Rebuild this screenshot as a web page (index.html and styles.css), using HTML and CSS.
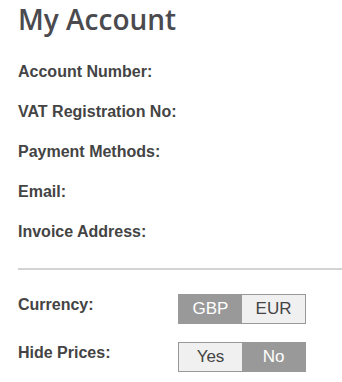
FILE: index.html
```html
<!DOCTYPE html>
<html lang="en">
<head>
    <meta charset="UTF-8">
    <meta name="viewport" content="width=device-width, initial-scale=1.0">
    <title>My Account</title>
    <link rel="stylesheet" href="styles.css">
</head>
<body>
    <div class="account">
        <h1>My Account</h1>

        <div class="details">
            <div class="detail-row"><span class="label">Account Number:</span></div>
            <div class="detail-row"><span class="label">VAT Registration No:</span></div>
            <div class="detail-row"><span class="label">Payment Methods:</span></div>
            <div class="detail-row"><span class="label">Email:</span></div>
            <div class="detail-row"><span class="label">Invoice Address:</span></div>
        </div>

        <hr class="divider">

        <div class="settings">
            <div class="setting-row">
                <span class="label">Currency:</span>
                <div class="toggle">
                    <button class="toggle-option active">GBP</button>
                    <button class="toggle-option">EUR</button>
                </div>
            </div>
            <div class="setting-row">
                <span class="label">Hide Prices:</span>
                <div class="toggle">
                    <button class="toggle-option">Yes</button>
                    <button class="toggle-option active">No</button>
                </div>
            </div>
        </div>
    </div>
</body>
</html>
```

FILE: styles.css
```css
:root {
    --text-color: #444444;
    --title-color: #4a4a4f;
    --toggle-dark: #999999;
    --toggle-light: #f0f0f0;
    --border-color: #d4d4d4;
    --white: #ffffff;
}

* {
    margin: 0;
    padding: 0;
    box-sizing: border-box;
}

body {
    background-color: var(--white);
    color: var(--text-color);
    font-family: 'Liberation Sans', Arial, sans-serif;
}

.account {
    padding: 0 0 0 18px;
}

h1 {
    font-family: 'Open Sans', 'Lato', sans-serif;
    font-weight: 600;
    font-size: 28px;
    line-height: 38px;
    color: var(--title-color);
    margin-bottom: 14px;
}

.detail-row {
    height: 40px;
    display: flex;
    align-items: center;
}

.label {
    font-size: 16px;
    font-weight: 700;
    color: var(--text-color);
}

.divider {
    border: none;
    border-top: 2px solid var(--border-color);
    margin-top: 16px;
    margin-bottom: 24px;
}

.settings {
    display: flex;
    flex-direction: column;
    gap: 18px;
}

.setting-row {
    display: flex;
    align-items: flex-start;
}

.setting-row .label {
    width: 160px;
    padding-top: 2px;
}

.toggle {
    display: flex;
    border: 1px solid var(--toggle-dark);
}

.toggle-option {
    width: 63px;
    height: 28px;
    border: none;
    background-color: var(--toggle-light);
    color: var(--text-color);
    font-family: 'Liberation Sans', Arial, sans-serif;
    font-size: 17px;
    cursor: pointer;
}

.toggle-option.active {
    background-color: var(--toggle-dark);
    color: var(--white);
}
```
